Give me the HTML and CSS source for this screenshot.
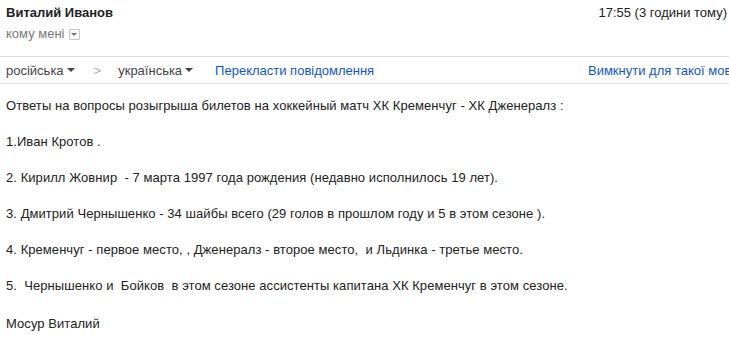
FILE: index.html
```html
<!DOCTYPE html>
<html lang="uk">
<head>
<meta charset="utf-8">
<title>Лист</title>
<link rel="stylesheet" href="styles.css">
</head>
<body>
<div class="mail">
  <div class="header">
    <div class="sender">
      <div class="name">Виталий Иванов</div>
      <div class="to">кому мені <span class="to-menu"><span class="tri-small"></span></span></div>
    </div>
    <div class="date">17:55 (3 години тому)</div>
  </div>
  <div class="translate">
    <span class="lang">російська<span class="tri"></span></span>
    <span class="sep">&gt;</span>
    <span class="lang">українська<span class="tri"></span></span>
    <a class="link">Перекласти повідомлення</a>
    <span class="off"><a class="link">Вимкнути для такої мови: російська</a></span>
  </div>
  <div class="body">
    <p>Ответы на вопросы розыгрыша билетов на хоккейный матч ХК Кременчуг - ХК Дженералз :</p>
    <p>1.Иван Кротов .</p>
    <p>2. Кирилл Жовнир&nbsp; - 7 марта 1997 года рождения (недавно исполнилось 19 лет).</p>
    <p>3. Дмитрий Чернышенко - 34 шайбы всего (29 голов в прошлом году и 5 в этом сезоне ).</p>
    <p>4. Кременчуг - первое место, , Дженералз - второе место,&nbsp; и Льдинка - третье место.</p>
    <p>5.&nbsp; Чернышенко и&nbsp; Бойков&nbsp; в этом сезоне ассистенты капитана ХК Кременчуг в этом сезоне.</p>
    <p class="sign">Мосур Виталий</p>
  </div>
</div>
</body>
</html>
```

FILE: styles.css
```css
html, body {
  margin: 0;
  padding: 0;
  background: #fff;
}
body {
  font-family: "Liberation Sans", Arial, sans-serif;
  font-size: 13px;
  color: #222;
  overflow: hidden;
}
.mail {
  width: 729px;
}
.header {
  display: flex;
  justify-content: space-between;
  align-items: flex-start;
  padding: 5px 2px 0 6px;
  height: 51px;
  box-sizing: border-box;
}
.name {
  font-weight: bold;
  font-size: 13px;
  line-height: 16px;
  color: #222;
}
.to {
  margin-top: 5px;
  color: #777;
  line-height: 16px;
  display: flex;
  align-items: center;
  gap: 4px;
}
.to-menu {
  display: inline-flex;
  align-items: center;
  justify-content: center;
  width: 11px;
  height: 11px;
  border: 1px solid #c6c6c6;
  border-radius: 1px;
  box-sizing: border-box;
  margin-top: 1px;
}
.tri-small {
  width: 0;
  height: 0;
  border-left: 3px solid transparent;
  border-right: 3px solid transparent;
  border-top: 3px solid #777;
}
.date {
  line-height: 16px;
  color: #222;
}
.translate {
  display: flex;
  align-items: center;
  height: 26px;
  border-top: 1px solid #ddd;
  border-bottom: 1px solid #ddd;
  margin-top: 5px;
  padding-left: 6px;
  white-space: nowrap;
}
.lang {
  color: #444;
  display: inline-flex;
  align-items: center;
}
.tri {
  display: inline-block;
  width: 0;
  height: 0;
  margin-left: 3px;
  border-left: 4px solid transparent;
  border-right: 4px solid transparent;
  border-top: 4px solid #444;
}
.sep {
  color: #aaa;
  margin: 0 17px 0 19px;
}
.link {
  color: #15c;
  cursor: pointer;
  margin-left: 22px;
}
.off {
  margin-left: auto;
  width: 141px;
  overflow: hidden;
}
.off .link {
  margin-left: 0;
}
.body {
  padding: 13px 6px 0 6px;
  letter-spacing: 0.06px;
}
.body p {
  margin: 0 0 18px 0;
  line-height: 18px;
}
.body p.sign {
  margin-top: 20px;
}
```
